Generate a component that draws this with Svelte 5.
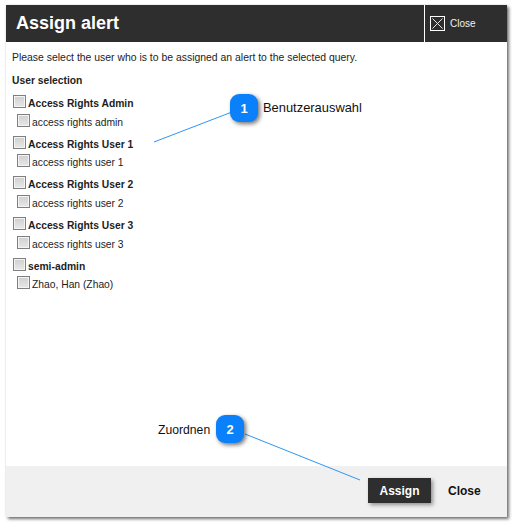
<script>
  const groups = [
    { name: 'Access Rights Admin', users: ['access rights admin'] },
    { name: 'Access Rights User 1', users: ['access rights user 1'] },
    { name: 'Access Rights User 2', users: ['access rights user 2'] },
    { name: 'Access Rights User 3', users: ['access rights user 3'] },
    { name: 'semi-admin', users: ['Zhao, Han (Zhao)'] }
  ];
</script>

<div class="page">
  <div class="dialog">
    <header class="head">
      <h1>Assign alert</h1>
      <div class="close-top">
        <span class="x-box">
          <svg width="11" height="11" viewBox="0 0 11 11"><path d="M0.5 0.5L10.5 10.5M10.5 0.5L0.5 10.5" stroke="#e6e6e6" stroke-width="1" fill="none" /></svg>
        </span>
        <span>Close</span>
      </div>
    </header>

    <main class="body">
      <p class="intro">Please select the user who is to be assigned an alert to the selected query.</p>
      <div class="section">User selection</div>
      {#each groups as g}
        <div class="group">
          <div class="row">
            <span class="check"></span>
            <b>{g.name}</b>
          </div>
          {#each g.users as u}
            <div class="row sub">
              <span class="check"></span>
              <span>{u}</span>
            </div>
          {/each}
        </div>
      {/each}
    </main>

    <footer class="foot">
      <button class="assign">Assign</button>
      <button class="close">Close</button>
    </footer>
  </div>

  <!-- annotation callouts -->
  <svg class="lines" width="517" height="526">
    <line x1="154" y1="142" x2="232" y2="112" stroke="#2f95f5" stroke-width="1" />
    <line x1="245" y1="434" x2="360" y2="480" stroke="#2f95f5" stroke-width="1" />
  </svg>
  <div class="badge b1">1</div>
  <div class="note n1">Benutzerauswahl</div>
  <div class="badge b2">2</div>
  <div class="note n2">Zuordnen</div>
</div>

<style>
  :global(body) {
    margin: 0;
    background: #fff;
  }
  .page {
    position: relative;
    width: 517px;
    height: 526px;
    overflow: hidden;
    padding: 5px 0 0 6px;
    box-sizing: border-box;
    font-family: "Liberation Sans", Arial, sans-serif;
  }
  .dialog {
    width: 501px;
    height: 512px;
    background: #fff;
    display: flex;
    flex-direction: column;
    box-shadow: 2px 2px 3px rgba(0, 0, 0, 0.55), 0 0 2px rgba(0, 0, 0, 0.12);
  }
  .head {
    height: 37px;
    background: #2e2e2e;
    color: #fff;
    display: flex;
    align-items: stretch;
    justify-content: space-between;
    flex: none;
  }
  h1 {
    margin: 0;
    padding: 0 0 0 10px;
    font-size: 18px;
    font-weight: bold;
    line-height: 37px;
  }
  .close-top {
    width: 83px;
    border-left: 1px solid #fff;
    display: flex;
    align-items: center;
    gap: 5px;
    padding-left: 5px;
    box-sizing: border-box;
    font-size: 10px;
    color: #f2f2f2;
  }
  .x-box {
    width: 11px;
    height: 11px;
    padding: 1px;
    border: 1px solid #fff;
    display: flex;
  }
  .body {
    flex: 1;
    padding: 10px 6px 0;
    font-size: 10.3px;
    color: #222;
  }
  .intro {
    margin: 0;
    font-size: 10.43px;
    line-height: 12px;
    color: #222;
  }
  .section {
    margin-top: 11px;
    font-weight: bold;
    line-height: 12px;
    margin-bottom: 8px;
  }
  .group {
    height: 40.7px;
  }
  .row {
    display: flex;
    align-items: flex-start;
    gap: 2px;
    height: 18.5px;
    padding-left: 1px;
    color: #1d1d1d;
    line-height: 12px;
  }
  .row b {
    margin-top: 3px;
  }
  .row.sub {
    padding-left: 5px;
    height: 22.2px;
  }
  .row.sub span:last-child {
    margin-top: 3px;
  }
  .check {
    width: 11px;
    height: 11px;
    border: 1px solid #7f7f7f;
    background: linear-gradient(#cfcfcf, #e8e8e8);
    box-shadow: inset 0 0 0 1px #f4f4f4;
    flex: none;
  }
  .foot {
    height: 51px;
    flex: none;
    background: #f0f0f0;
    display: flex;
    align-items: center;
    padding: 0 0 2px 362px;
    box-sizing: border-box;
  }
  button {
    font-family: inherit;
    font-weight: bold;
    font-size: 12px;
    border: none;
    cursor: pointer;
  }
  .assign {
    width: 63px;
    height: 25px;
    background: #2e2e2e;
    color: #fff;
    box-shadow: 2px 2px 4px rgba(0, 0, 0, 0.4);
  }
  .close {
    background: none;
    color: #111;
    margin-left: 17px;
    padding: 0;
  }
  .lines {
    position: absolute;
    left: 0;
    top: 0;
    pointer-events: none;
  }
  .badge {
    position: absolute;
    width: 28px;
    height: 28px;
    border-radius: 9px;
    background: #0a80fb;
    color: #fff;
    font-weight: bold;
    font-size: 13px;
    display: flex;
    align-items: center;
    justify-content: center;
    box-shadow: 2px 2px 4px rgba(0, 0, 0, 0.55);
  }
  .b1 { left: 230px; top: 94px; }
  .b2 { left: 216px; top: 415px; }
  .note {
    position: absolute;
    font-size: 12.2px;
    line-height: 16px;
    color: #111;
  }
  .n1 { left: 263px; top: 100px; font-size: 12.9px; }
  .n2 { left: 158px; top: 422px; }
</style>
